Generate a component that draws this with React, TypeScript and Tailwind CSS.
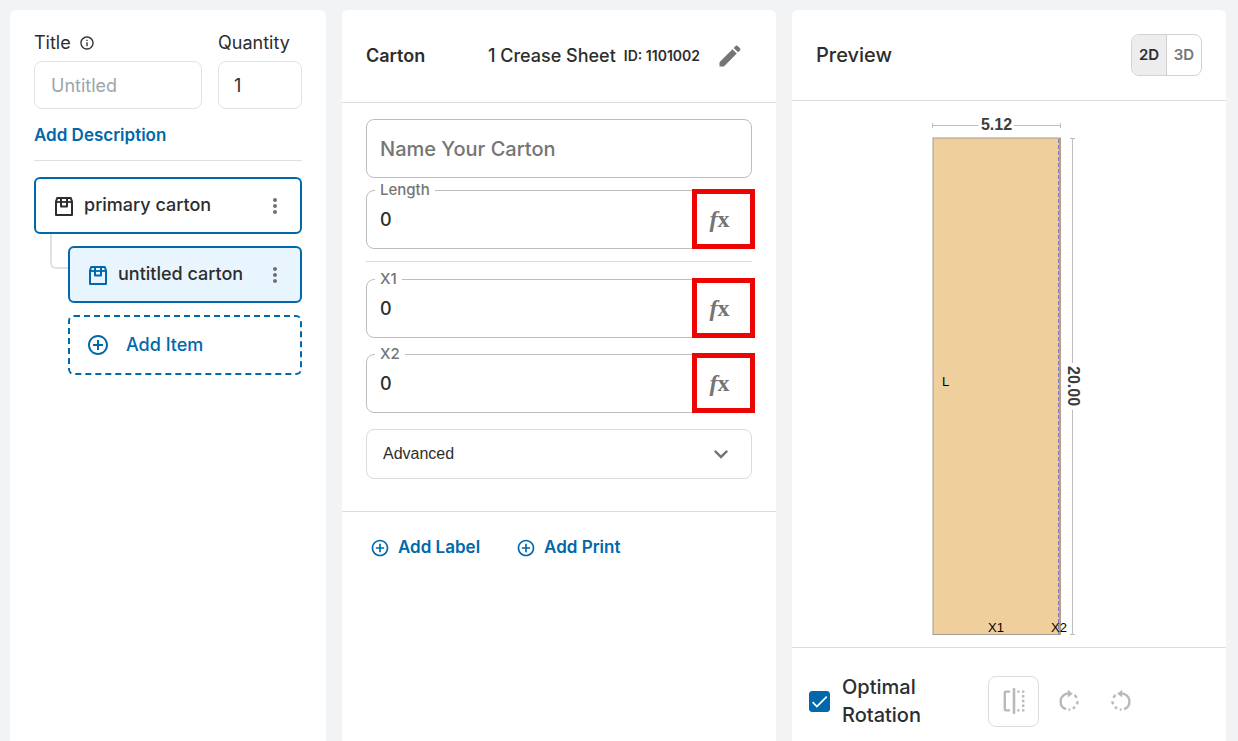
import { useState } from "react";
import {
  MdAddCircleOutline,
  MdCheck,
  MdEdit,
  MdInfoOutline,
  MdKeyboardArrowDown,
  MdMoreVert,
} from "react-icons/md";

function CartonIcon({ className }: { className: string }) {
  return (
    <svg viewBox="0 0 20 20" className={className} fill="none" stroke="currentColor" strokeWidth="2" aria-hidden="true">
      <path d="M2 5.600 3.200 2h13.600L18 5.600V19H2z" strokeLinejoin="round" />
      <path d="M2 6h16" strokeWidth="1.800" />
      <path d="M7 2v8.600h6V2" strokeWidth="2" strokeLinejoin="round" />
    </svg>
  );
}

function FlipIcon() {
  return (
    <svg viewBox="0 0 24 26" className="h-[26px] w-6" fill="none" stroke="currentColor" strokeWidth="2.400" aria-hidden="true">
      <path d="M8 3.600H4Q2.800 3.600 2.800 4.800V21.200Q2.800 22.400 4 22.400H8" />
      <path d="M12 1.200v23.600" strokeWidth="2.600" strokeLinecap="round" />
      <path d="M15.300 3.600h2.200M15.300 22.400h2.200M20 3.600h2.400M20 22.400h2.400M21.200 7v2.400M21.200 11.800v2.400M21.200 16.600v2.400" />
    </svg>
  );
}

function RotateIcon({ className }: { className: string }) {
  return (
    <svg viewBox="0 0 24 24" className={className} fill="none" stroke="currentColor" strokeWidth="2.400" aria-hidden="true">
      <path d="M13 4.400C8 3.800 3.600 7.600 3.600 12.400C3.600 16 5.800 19 9 20.200" />
      <path d="M10.800 0.800v7.800l5-3.900z" fill="currentColor" stroke="none" />
      <path d="M17.400 6q1.400 1 2.200 2.800M20.600 12.200q0 1.600-.7 3M18 17.800q-.9.900-2.200 1.600M13.300 20.600h-1.800" />
    </svg>
  );
}

function CartonCard({ name, active }: { name: string; active?: boolean }) {
  return (
    <div
      className={
        active
          ? "flex h-[57px] items-center rounded-md border-2 border-[#0068ab] bg-[#e8f5fe] pl-[18px] pr-[13px]"
          : "flex h-[57px] items-center rounded-md border-2 border-[#0068ab] bg-white pl-[18px] pr-[13px]"
      }
    >
      <CartonIcon className={active ? "size-5 text-[#0068ab]" : "size-5 text-[#2d2d2d]"} />
      <span className="ml-[10px] flex-1 whitespace-nowrap pb-[2px] text-lg font-medium">{name}</span>
      <button type="button" aria-label={`Options for ${name}`} className="text-[#707070]">
        <MdMoreVert className="size-6" />
      </button>
    </div>
  );
}

function FormulaField({ id, label }: { id: string; label: string }) {
  const [value, setValue] = useState("0");
  return (
    <div className="relative flex h-[59px] items-center rounded-lg border border-[#bdbdbd]">
      <label htmlFor={id} className="absolute -top-[11px] left-2 bg-white px-[5px] text-[15px] font-medium leading-5 text-[#757575]">
        {label}
      </label>
      <input
        id={id}
        value={value}
        onChange={(e) => setValue(e.target.value)}
        className="h-full min-w-0 flex-1 bg-transparent pl-[13px] text-lg font-medium outline-none"
      />
      <button
        type="button"
        aria-label={`Formula for ${label}`}
        className="absolute -right-1 -top-[2px] h-[60px] w-[63px] border-[5px] border-[#ec0505] bg-white pr-2 font-['Liberation_Serif',serif] text-2xl font-bold leading-none text-[#757575]"
      >
        <i>f</i>x
      </button>
    </div>
  );
}

function Sidebar() {
  return (
    <aside className="w-[316px] shrink-0 rounded-t-md bg-white px-6 pt-[21px]">
      <div className="flex gap-4">
        <div className="min-w-0 flex-1">
          <div className="flex h-6 items-center gap-2">
            <label htmlFor="title" className="text-lg">Title</label>
            <MdInfoOutline className="size-4" />
          </div>
          <input
            id="title"
            placeholder="Untitled"
            className="mt-[6px] h-12 w-full rounded-lg border border-[#e0e3e5] px-4 text-lg outline-none placeholder:text-[#9ba5ad]"
          />
        </div>
        <div className="w-[84px]">
          <label htmlFor="quantity" className="flex h-6 items-center text-lg">Quantity</label>
          <input
            id="quantity"
            defaultValue="1"
            className="mt-[6px] h-12 w-full rounded-lg border border-[#e0e3e5] px-[15px] text-lg outline-none"
          />
        </div>
      </div>
      <button type="button" className="mt-[14px] block h-6 text-[17px] font-semibold leading-6 text-[#0068ab]">
        Add Description
      </button>
      <hr className="mb-4 mt-[13px] border-[#e0e0e0]" />
      <CartonCard name="primary carton" />
      <div className="flex">
        <div className="ml-4 h-[35px] w-[18px] shrink-0 rounded-bl-md border-b-2 border-l-2 border-[#dfe2e4]" />
        <div className="min-w-0 flex-1 pt-3">
          <CartonCard name="untitled carton" active />
          <button
            type="button"
            className="mt-3 flex h-[60px] w-full items-center rounded-md border-2 border-dashed border-[#0068ab] pl-4 text-lg font-medium text-[#0068ab]"
          >
            <MdAddCircleOutline className="size-6" />
            <span className="ml-4">Add Item</span>
          </button>
        </div>
      </div>
    </aside>
  );
}

function CartonForm() {
  return (
    <main className="min-w-0 flex-1 rounded-t-md bg-white">
      <header className="flex h-[93px] items-center border-b border-[#dcdcdc] pl-6 pr-8">
        <h1 className="flex-1 text-lg font-semibold">Carton</h1>
        <span className="text-lg font-medium">1 Crease Sheet</span>
        <span className="ml-2 text-sm font-semibold">ID: 1101002</span>
        <button type="button" aria-label="Edit style" className="ml-4 text-[#757575]">
          <MdEdit className="size-7" />
        </button>
      </header>
      <div className="px-6 pt-4">
        <input
          aria-label="Name Your Carton"
          placeholder="Name Your Carton"
          className="block h-[59px] w-full rounded-lg border border-[#bdbdbd] px-[13px] text-xl font-medium outline-none placeholder:text-[#757575]"
        />
        <div className="mt-3">
          <FormulaField id="length" label="Length" />
        </div>
        <hr className="mb-[17px] mt-3 border-[#dcdcdc]" />
        <div className="flex flex-col gap-4">
          <FormulaField id="x1" label="X1" />
          <FormulaField id="x2" label="X2" />
          <button
            type="button"
            className="flex h-[50px] items-center justify-between rounded-lg border border-[#dcdcdc] pl-4 pr-4 font-['Liberation_Sans',sans-serif] text-base"
          >
            Advanced
            <MdKeyboardArrowDown className="size-7 text-[#757575]" />
          </button>
        </div>
      </div>
      <div className="mt-8 flex gap-9 border-t border-[#dcdcdc] px-7 pt-[23px] text-[17px] font-semibold text-[#0068ab]">
        <button type="button" className="flex items-center gap-2">
          <MdAddCircleOutline className="size-5" />
          Add Label
        </button>
        <button type="button" className="flex items-center gap-2">
          <MdAddCircleOutline className="size-5" />
          Add Print
        </button>
      </div>
    </main>
  );
}

function SheetDrawing() {
  return (
    <svg viewBox="0 0 200 546" className="block h-[546px] w-[200px]" role="img" aria-label="Sheet preview">
      <g stroke="#bdbdbd" fill="none">
        <path d="M24 24.500H69.500M105 24.500H151M23.500 22v5M151.500 22v5" />
        <path d="M163.500 37V262M163.500 309V533M161 37.500h5M161 533.500h5" />
      </g>
      <rect x="24" y="37" width="127.500" height="496.500" fill="#efcf9b" stroke="#a59a94" />
      <path d="M151 37v497" stroke="#b5a08f" strokeWidth="2" />
      <path d="M149.500 38v495" stroke="#8379c6" strokeDasharray="4 2" />
      <g className="font-['Liberation_Sans',sans-serif]">
        <text x="87.500" y="29" fontSize="16" fontWeight="700" textAnchor="middle" fill="#3c3c3c">5.12</text>
        <text transform="translate(159 285) rotate(90)" fontSize="16" fontWeight="700" textAnchor="middle" fill="#3c3c3c">20.00</text>
        <text x="33" y="285" fontSize="13" fill="#000">L</text>
        <text x="87" y="531" fontSize="13" textAnchor="middle" fill="#000">X1</text>
        <text x="150" y="531" fontSize="13" textAnchor="middle" fill="#000">X2</text>
      </g>
    </svg>
  );
}

function Preview() {
  const [mode, setMode] = useState("2D");
  return (
    <section className="min-w-0 flex-1 rounded-t-md bg-white">
      <header className="flex h-[91px] items-center justify-between border-b border-[#dcdcdc] px-6">
        <h2 className="text-xl font-medium">Preview</h2>
        <div className="flex h-[42px] overflow-hidden rounded-lg border border-[#d2d2d2] text-[15px] font-semibold">
          {["2D", "3D"].map((m) => (
            <button
              key={m}
              type="button"
              onClick={() => setMode(m)}
              className={
                m === mode
                  ? "w-[35px] border-r border-[#cfcfcf] bg-[#ededed] text-[#2d2d2d]"
                  : "w-[34px] text-[#757575]"
              }
            >
              {m}
            </button>
          ))}
        </div>
      </header>
      <div className="flex justify-center">
        <SheetDrawing />
      </div>
      <footer className="flex items-center border-t border-[#dcdcdc] pl-[17px] pt-[25px]">
        <label className="flex w-[179px] items-center gap-3 text-xl font-medium leading-7">
          <span className="grid shrink-0">
            <input
              type="checkbox"
              defaultChecked
              className="peer col-start-1 row-start-1 size-[21px] appearance-none rounded-[3px] border border-[#0068ab] checked:bg-[#0068ab]"
            />
            <MdCheck className="pointer-events-none invisible col-start-1 row-start-1 size-[21px] text-white peer-checked:visible" />
          </span>
          <span className="w-24">Optimal Rotation</span>
        </label>
        <button
          type="button"
          aria-label="Flip"
          className="grid size-[51px] place-items-center rounded-lg border border-[#dcdcdc] text-[#b9b9b9]"
        >
          <FlipIcon />
        </button>
        <button type="button" aria-label="Rotate right" className="ml-[18px] text-[#b9b9b9]">
          <RotateIcon className="size-6" />
        </button>
        <button type="button" aria-label="Rotate left" className="ml-7 text-[#b9b9b9]">
          <RotateIcon className="size-6 -scale-x-100" />
        </button>
      </footer>
    </section>
  );
}

export default function App() {
  return (
    <div className="flex min-h-screen gap-4 bg-[#f2f3f5] pl-[10px] pr-3 pt-[10px] font-['Inter',sans-serif] text-[#2d2d2d]">
      <Sidebar />
      <CartonForm />
      <Preview />
    </div>
  );
}
